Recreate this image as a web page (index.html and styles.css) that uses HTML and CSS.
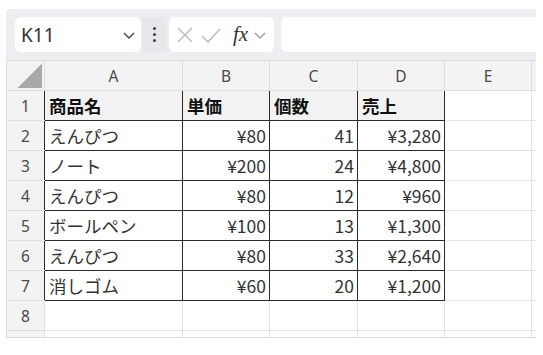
FILE: index.html
```html
<!DOCTYPE html>
<html lang="ja">
<head>
  <meta charset="UTF-8">
  <title>売上表</title>
  <link rel="stylesheet" href="styles.css">
</head>
<body>
  <div class="sheet">
    <div class="toolbar">
      <div class="namebox">
        <span>K11</span>
        <svg class="chev" width="14" height="10" viewBox="0 0 14 10"><polyline points="2,3 7,8 12,3" fill="none" stroke="#444" stroke-width="1.4"/></svg>
      </div>
      <div class="dots"><i></i><i></i><i></i></div>
      <div class="fbtns">
        <svg width="20" height="20" viewBox="0 0 20 20"><path d="M3 3 L17 17 M17 3 L3 17" stroke="#b8b8b8" stroke-width="1.4" fill="none"/></svg>
        <svg width="22" height="20" viewBox="0 0 22 20"><polyline points="2,11 8,17 20,4" stroke="#b8b8b8" stroke-width="1.4" fill="none"/></svg>
        <span class="fx">fx</span>
        <svg class="chev" width="14" height="10" viewBox="0 0 14 10"><polyline points="2,3 7,8 12,3" fill="none" stroke="#999" stroke-width="1.3"/></svg>
      </div>
      <div class="finput"></div>
    </div>

    <div class="grid">
      <table>
        <colgroup>
          <col class="c-rh"><col class="c-a"><col class="c-b"><col class="c-c"><col class="c-d"><col class="c-e"><col class="c-f">
        </colgroup>
        <tr class="colhead">
          <th class="corner"><span class="tri"></span></th>
          <th>A</th><th>B</th><th>C</th><th>D</th><th>E</th><th></th>
        </tr>
        <tr>
          <th class="rh">1</th>
          <td class="b hd">商品名</td><td class="b hd">単価</td><td class="b hd">個数</td><td class="b hd">売上</td><td></td><td></td>
        </tr>
        <tr>
          <th class="rh">2</th>
          <td class="b">えんぴつ</td><td class="b num">¥80</td><td class="b num">41</td><td class="b num">¥3,280</td><td></td><td></td>
        </tr>
        <tr>
          <th class="rh">3</th>
          <td class="b">ノート</td><td class="b num">¥200</td><td class="b num">24</td><td class="b num">¥4,800</td><td></td><td></td>
        </tr>
        <tr>
          <th class="rh">4</th>
          <td class="b">えんぴつ</td><td class="b num">¥80</td><td class="b num">12</td><td class="b num">¥960</td><td></td><td></td>
        </tr>
        <tr>
          <th class="rh">5</th>
          <td class="b">ボールペン</td><td class="b num">¥100</td><td class="b num">13</td><td class="b num">¥1,300</td><td></td><td></td>
        </tr>
        <tr>
          <th class="rh">6</th>
          <td class="b">えんぴつ</td><td class="b num">¥80</td><td class="b num">33</td><td class="b num">¥2,640</td><td></td><td></td>
        </tr>
        <tr>
          <th class="rh">7</th>
          <td class="b">消しゴム</td><td class="b num">¥60</td><td class="b num">20</td><td class="b num">¥1,200</td><td></td><td></td>
        </tr>
        <tr>
          <th>8</th>
          <td></td><td></td><td></td><td></td><td></td><td></td>
        </tr>
        <tr>
          <th></th>
          <td></td><td></td><td></td><td></td><td></td><td></td>
        </tr>
      </table>
    </div>
  </div>
</body>
</html>
```

FILE: styles.css
```css
* {
  margin: 0;
  padding: 0;
  box-sizing: border-box;
}
body {
  background: #ffffff;
  font-family: 'Noto Sans', sans-serif;
}
.sheet {
  margin: 9px 0 0 6px;
  width: 530px;
  height: 329px;
  background: #eceef1;
  overflow: hidden;
  border-top-left-radius: 4px;
}
.toolbar {
  display: flex;
  align-items: center;
  height: 51px;
  padding: 0 0 0 9px;
}
.namebox {
  width: 126px;
  height: 35px;
  background: #fff;
  border-radius: 6px;
  display: flex;
  align-items: center;
  justify-content: space-between;
  padding: 0 5px 0 6px;
  font-size: 19px;
  color: #333;
}
.dots {
  width: 25px;
  height: 35px;
  margin-left: 1px;
  display: flex;
  flex-direction: column;
  align-items: center;
  justify-content: center;
  gap: 3px;
  background: #e6e8eb;
}
.dots i {
  width: 3px;
  height: 3px;
  border-radius: 50%;
  background: #444;
}
.fbtns {
  width: 105px;
  height: 35px;
  margin-left: 2px;
  background: #fff;
  border-radius: 6px;
  display: flex;
  align-items: center;
  padding: 0 3px 0 6px;
  gap: 5px;
}
.fx {
  font-family: 'Liberation Serif', serif;
  font-style: italic;
  font-size: 21px;
  color: #333;
  margin-left: 6px;
  line-height: 1;
}
.finput {
  flex: 1;
  height: 35px;
  margin-left: 7px;
  background: #fff;
  border-radius: 6px 0 0 6px;
}
.grid {
  height: 278px;
  overflow: hidden;
  border-bottom: 1px solid #dcdcdc;
}
table {
  border-collapse: collapse;
  table-layout: fixed;
  width: 558px;
}
.c-rh { width: 38px; }
.c-a { width: 138px; }
.c-b { width: 87px; }
.c-c { width: 88px; }
.c-d { width: 87px; }
.c-e { width: 87px; }
.c-f { width: 33px; }
tr {
  height: 30px;
}
th {
  background: #f3f3f3;
  font-weight: normal;
  font-size: 15.5px;
  color: #4a4a4a;
  border: 1px solid #dedede;
}
th.corner {
  position: relative;
}
.tri {
  position: absolute;
  right: 2px;
  bottom: 2px;
  width: 24px;
  height: 24px;
  background: linear-gradient(135deg, transparent 50%, #a9a9a9 50%);
}
th.rh {
  border-right: none;
}
td {
  background: #fff;
  border: 1px solid #e3e3e3;
  font-family: 'Noto Sans CJK JP', sans-serif;
  font-size: 17.5px;
  color: #333;
  padding: 0 3px 0 4px;
  white-space: nowrap;
  overflow: hidden;
  line-height: 1;
}
td.b {
  border: 1px solid #2b2b2b;
}
td.hd {
  background: #f2f2f2;
  font-weight: bold;
  color: #111;
}
td.num {
  text-align: right;
}
```
